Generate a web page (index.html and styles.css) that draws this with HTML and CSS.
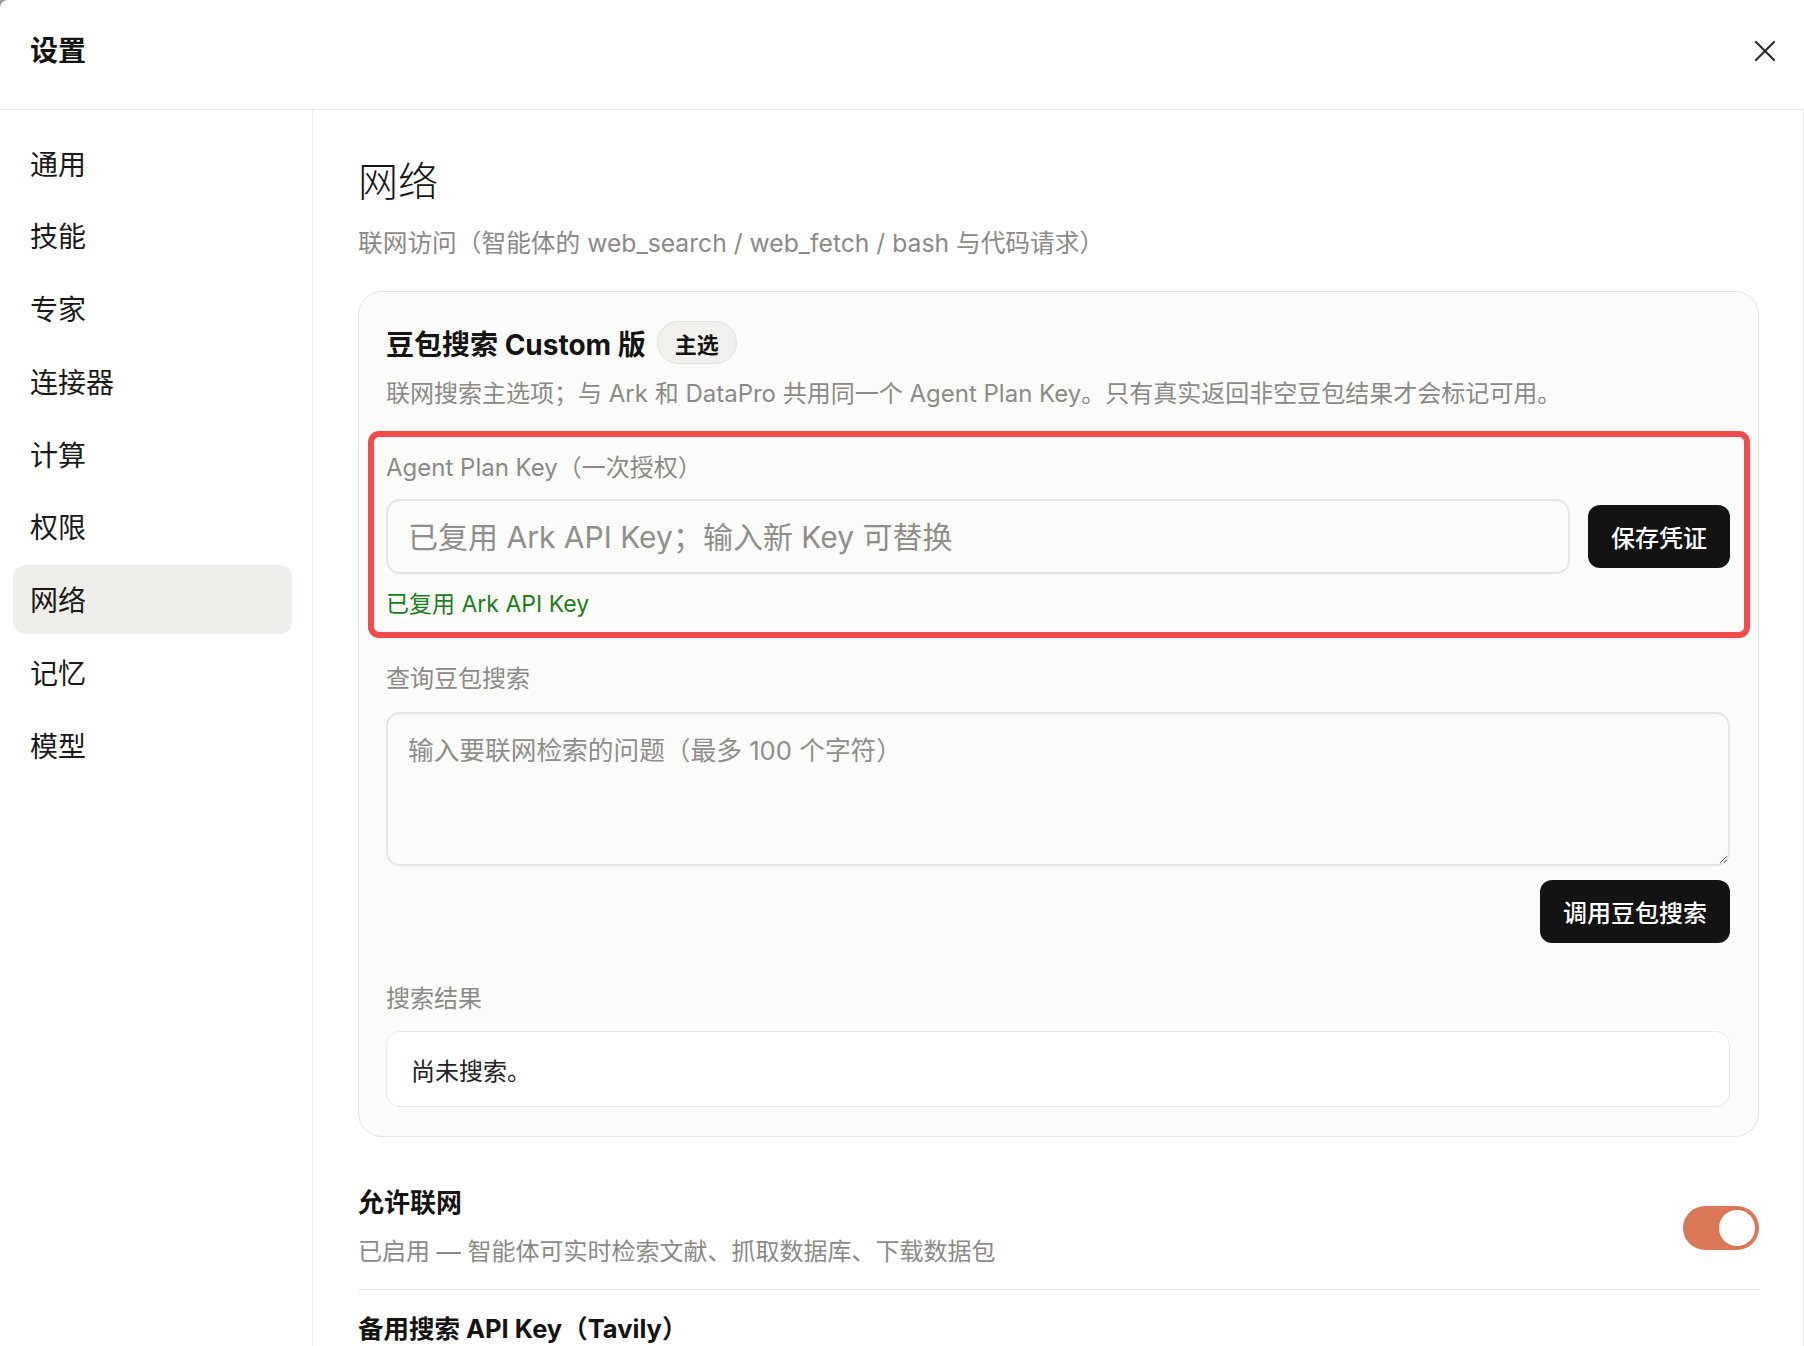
FILE: index.html
```html
<!DOCTYPE html>
<html lang="zh-CN">
<head>
	<meta charset="utf-8">
	<title>设置</title>
	<link rel="stylesheet" href="styles.css">
</head>
<body>

<div class="modal">
	<div class="modal-head">
		<h1 class="modal-title">设置</h1>
		<button class="close-btn" type="button" aria-label="关闭">
			<svg width="22" height="22" viewBox="0 0 22 22" fill="none" stroke="currentColor" stroke-width="2.2" stroke-linecap="round">
				<path d="M2 2 L20 20"/>
				<path d="M20 2 L2 20"/>
			</svg>
		</button>
	</div>

	<div class="modal-body">
		<nav class="side-nav">
			<a class="nav-item">通用</a>
			<a class="nav-item">技能</a>
			<a class="nav-item">专家</a>
			<a class="nav-item">连接器</a>
			<a class="nav-item">计算</a>
			<a class="nav-item">权限</a>
			<a class="nav-item active">网络</a>
			<a class="nav-item">记忆</a>
			<a class="nav-item">模型</a>
		</nav>

		<main class="panel">
			<h2 class="panel-title">网络</h2>
			<p class="panel-sub">联网访问（智能体的 web_search / web_fetch / bash 与代码请求）</p>

			<section class="card">
				<div class="card-head">
					<h3 class="card-title">豆包搜索 Custom 版</h3>
					<span class="badge">主选</span>
				</div>
				<p class="card-desc">联网搜索主选项；与 Ark 和 DataPro 共用同一个 Agent Plan Key。只有真实返回非空豆包结果才会标记可用。</p>

				<div class="field key-field">
					<label class="field-label" for="plan-key">Agent Plan Key（一次授权）</label>
					<div class="key-row">
						<input class="text-input" id="plan-key" type="text" placeholder="已复用 Ark API Key；输入新 Key 可替换">
						<button class="dark-btn" type="button">保存凭证</button>
					</div>
					<div class="field-ok">已复用 Ark API Key</div>
				</div>

				<div class="field query-field">
					<label class="field-label" for="query">查询豆包搜索</label>
					<textarea class="text-area" id="query" placeholder="输入要联网检索的问题（最多 100 个字符）"></textarea>
					<div class="btn-row">
						<button class="dark-btn" type="button">调用豆包搜索</button>
					</div>
				</div>

				<div class="field result-field">
					<div class="field-label">搜索结果</div>
					<div class="result-box">尚未搜索。</div>
				</div>
			</section>

			<div class="setting-row">
				<div class="setting-text">
					<div class="setting-name">允许联网</div>
					<div class="setting-desc">已启用 — 智能体可实时检索文献、抓取数据库、下载数据包</div>
				</div>
				<label class="toggle">
					<input type="checkbox" checked>
					<span class="toggle-track"></span>
				</label>
			</div>

			<div class="setting-name next-title">备用搜索 API Key（Tavily）</div>
		</main>
	</div>
</div>

</body>
</html>
```

FILE: styles.css
```css
* {
	box-sizing: border-box;
}
html, body {
	margin: 0;
	height: 100%;
}
body {
	background-color: #9a9a98;
	font-family: Inter, "Noto Sans CJK SC", "Noto Sans", sans-serif;
	color: #141413;
	overflow: hidden;
}
.modal {
	width: 100%;
	height: 100vh;
	background-color: #fff;
	border-top-left-radius: 8px;
	display: flex;
	flex-direction: column;
	overflow: hidden;
}

/* header */
.modal-head {
	height: 110px;
	flex: none;
	display: flex;
	align-items: center;
	justify-content: space-between;
	padding: 0 28px 7px 30px;
	border-bottom: 1px solid #e6e6e4;
}
.modal-title {
	margin: 0;
	font-size: 28px;
	font-weight: 700;
	line-height: 40px;
}
.close-btn {
	border: none;
	background: none;
	padding: 0;
	width: 22px;
	height: 22px;
	color: #2a2a2a;
	cursor: pointer;
}

.modal-body {
	flex: 1;
	min-height: 0;
	display: flex;
}

/* left nav */
.side-nav {
	width: 313px;
	flex: none;
	border-right: 1px solid #ececea;
	padding: 18px 20px 0 13px;
	display: flex;
	flex-direction: column;
	gap: 3.8px;
}
.nav-item {
	height: 69px;
	display: flex;
	align-items: center;
	padding-left: 17px;
	font-size: 28px;
	border-radius: 12px;
	color: #1a1a19;
}
.nav-item.active {
	background-color: #efeeeb;
}

/* right panel */
.panel {
	flex: 1;
	min-width: 0;
	padding: 46px 44px 0 45px;
	border-right: 1px solid #e8e8e6;
	overflow: hidden;
}
.panel-title {
	margin: 0;
	font-size: 40px;
	font-weight: 300;
	line-height: 52px;
}
.panel-sub {
	margin: 18px 0 0;
	font-size: 24.7px;
	line-height: 34px;
	color: #8b8a86;
}

.card {
	margin-top: 31px;
	border: 1px solid #e4e4e1;
	border-radius: 24px;
	background-color: #fbfbfa;
	padding: 29px 28px 29px 27px;
}
.card-head {
	height: 43px;
	display: flex;
	align-items: center;
	gap: 11px;
}
.card-title {
	margin: 0;
	font-size: 28px;
	font-weight: 700;
}
.badge {
	height: 43px;
	padding: 0 17px;
	display: inline-flex;
	align-items: center;
	font-size: 22px;
	font-weight: 700;
	background-color: #f1f0ed;
	border: 1px solid #e2e1de;
	border-radius: 999px;
}
.card-desc {
	margin: 13px 0 0;
	font-size: 24px;
	line-height: 34px;
	color: #8b8a86;
}

.field-label {
	display: block;
	font-size: 24px;
	line-height: 34px;
	color: #8b8a86;
}
.key-field {
	position: relative;
	margin-top: 40px;
}
/* red outline around the credentials block */
.key-field::after {
	content: "";
	position: absolute;
	top: -20px;
	left: -18px;
	right: -20px;
	bottom: -17px;
	border: 6px solid #f24b4b;
	border-radius: 11px;
	pointer-events: none;
}
.key-row {
	margin-top: 14px;
	display: flex;
	align-items: center;
	gap: 18px;
}
.text-input {
	flex: 1;
	height: 75px;
	border: 2px solid #e5e5e3;
	border-radius: 14px;
	background-color: #fbfbfa;
	padding: 0 20px;
	font-family: inherit;
	font-size: 30px;
	color: #141413;
	outline: none;
}
.text-input::placeholder,
.text-area::placeholder {
	color: #8f8e8a;
}
.field-ok {
	margin-top: 13px;
	font-size: 23px;
	line-height: 34px;
	color: #1b7d1b;
}
.dark-btn {
	height: 63px;
	padding: 0 23px;
	border: none;
	border-radius: 12px;
	background-color: #131313;
	color: #fff;
	font-family: inherit;
	font-size: 24px;
	font-weight: 500;
	white-space: nowrap;
}

.query-field {
	margin-top: 41px;
}
.text-area {
	display: block;
	width: 100%;
	height: 154px;
	margin-top: 16px;
	border: 2px solid #e5e5e3;
	border-radius: 14px;
	background-color: #fbfbfa;
	padding: 19px 20px;
	font-family: inherit;
	font-size: 25.7px;
	line-height: 36px;
	outline: none;
	resize: vertical;
}
.btn-row {
	margin-top: 14px;
	display: flex;
	justify-content: flex-end;
}

.result-field {
	margin-top: 39px;
}
.result-box {
	margin-top: 15px;
	height: 76px;
	display: flex;
	align-items: center;
	padding: 0 24px;
	background-color: #fff;
	border: 1.5px solid #e8e8e6;
	border-radius: 14px;
	font-size: 24px;
	color: #222;
}

/* settings rows below the card */
.setting-row {
	margin-top: 49px;
	padding-bottom: 20px;
	border-bottom: 1px solid #e6e6e4;
	display: flex;
	align-items: center;
	justify-content: space-between;
}
.setting-name {
	font-size: 26px;
	font-weight: 700;
	line-height: 34px;
}
.setting-desc {
	margin-top: 15px;
	font-size: 24px;
	line-height: 34px;
	color: #8b8a86;
}
.next-title {
	margin-top: 22px;
	font-size: 25.5px;
}

.toggle {
	position: relative;
	width: 76px;
	height: 44px;
	flex: none;
}
.toggle input {
	display: none;
}
.toggle-track {
	display: block;
	width: 100%;
	height: 100%;
	border-radius: 22px;
	background-color: #d97757;
}
.toggle-track::after {
	content: "";
	position: absolute;
	top: 4px;
	right: 4px;
	width: 36px;
	height: 36px;
	border-radius: 50%;
	background-color: #fff;
}
```
